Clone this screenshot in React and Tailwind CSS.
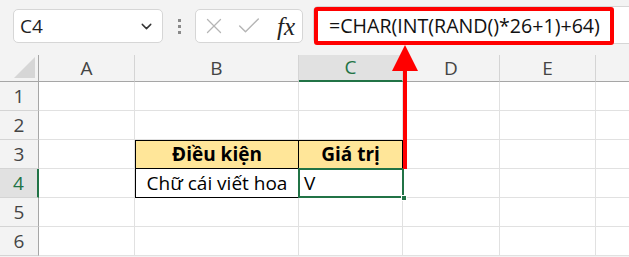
import { ChevronDown, X, Check } from "lucide-react";

const cols = ["A", "B", "C", "D", "E", "F"];
const rows = [1, 2, 3, 4, 5, 6];

function HeaderCell({ label }) {
    const selected = label === "C";
    return (
        <div
            className={
                selected
                    ? "h-[27px] flex items-center justify-center bg-[#e1e1e1] text-[#217346] border-r border-[#d4d4d4] border-b-2 border-b-[#217346]"
                    : "h-[27px] flex items-center justify-center text-[#444] border-r border-[#d4d4d4] border-b border-b-[#a6a6a6]"
            }
        >
            {label === "F" ? "" : label}
        </div>
    );
}

function Cell({ r, c }) {
    // bảng B3:C4
    if (r === 3 && c === "B")
        return <div className="h-[29px] bg-[#ffe699] border border-black flex items-center justify-center font-bold">Điều kiện</div>;
    if (r === 3 && c === "C")
        return <div className="h-[29px] bg-[#ffe699] border-y border-r border-black flex items-center justify-center font-bold">Giá trị</div>;
    if (r === 4 && c === "B")
        return <div className="h-[29px] bg-white border-x border-b border-black flex items-center justify-center">Chữ cái viết hoa</div>;
    if (r === 4 && c === "C")
        return (
            <div className="h-[29px] bg-white relative border-b border-black">
                <div className="absolute -left-[1px] -top-[1px] -right-[1px] -bottom-[1px] border-2 border-[#217346] flex items-center pl-[4px]">V</div>
                <div className="absolute -right-[4px] -bottom-[4px] w-[6px] h-[6px] bg-[#217346] border border-white" />
            </div>
        );
    return <div className="h-[29px] bg-white border-r border-b border-[#e1e1e1]" />;
}

export default function App() {
    return (
        <div className="w-[629px] h-[257px] bg-[#f3f3f3] overflow-hidden relative font-['Open_Sans',sans-serif]">
            {/* thanh công thức */}
            <div className="h-[55px] flex items-start pt-[9px] pl-[13px]">
                <div className="w-[150px] h-[34px] bg-white border border-[#d6d6d6] rounded-[5px] flex items-center justify-between pl-[6px] pr-[7px]">
                    <span className="text-[19px] text-[#222]">C4</span>
                    <ChevronDown className="w-[17px] h-[17px] text-[#333]" strokeWidth={2} />
                </div>
                <div className="w-[32px] h-[34px] flex flex-col items-center justify-center gap-[3px]">
                    <span className="w-[3px] h-[3px] bg-[#8a8a8a]" />
                    <span className="w-[3px] h-[3px] bg-[#8a8a8a]" />
                    <span className="w-[3px] h-[3px] bg-[#8a8a8a]" />
                </div>
                <div className="w-[108px] h-[34px] bg-white border border-[#d6d6d6] rounded-[5px] flex items-center pl-[5px] gap-[8px]">
                    <X className="w-[26px] h-[26px] text-[#b5b5b5]" strokeWidth={1.2} />
                    <Check className="w-[28px] h-[28px] text-[#b5b5b5]" strokeWidth={1.2} />
                    <span className="ml-[6px] text-[25px] leading-none italic text-[#222] font-['Liberation_Serif',serif]">fx</span>
                </div>
                <div className="ml-[10px] flex-1 h-[38px] -mt-[3px] bg-white border border-[#d6d6d6] rounded-l-[5px] -mr-[8px]">
                    <div className="w-[300px] h-[38px] border-[4px] border-[#ff0000] rounded-[3px] flex items-center pl-[11px] text-[19.6px] text-[#111]">
                        =CHAR(INT(RAND()*26+1)+64)
                    </div>
                </div>
            </div>

            {/* lưới */}
            <div className="grid grid-cols-[39px_96px_164px_104px_97px_96px_60px] text-[19px] text-black">
                <div className="h-[27px] border-r border-b border-[#a6a6a6] relative">
                    <svg className="absolute right-[3px] bottom-[3px]" width="21" height="21" viewBox="0 0 21 21">
                        <polygon points="21,0 21,21 0,21" fill="#d6d6d6" />
                    </svg>
                </div>
                {cols.map((c) => (
                    <HeaderCell key={c} label={c} />
                ))}
                {rows.map((r) => (
                    <div key={r} className="contents">
                        <div
                            className={
                                r === 4
                                    ? "h-[29px] flex items-center justify-center bg-[#e1e1e1] text-[#217346] border-b border-[#d4d4d4] border-r-2 border-r-[#217346]"
                                    : "h-[29px] flex items-center justify-center text-[#444] border-b border-[#d4d4d4] border-r border-r-[#a6a6a6]"
                            }
                        >
                            {r}
                        </div>
                        {cols.map((c) => (
                            <Cell key={c} r={r} c={c} />
                        ))}
                    </div>
                ))}
            </div>

            {/* mũi tên đỏ */}
            <svg className="absolute left-[390px] top-[44px]" width="30" height="126" viewBox="0 0 30 126">
                <polygon points="15,1 28,27 2,27" fill="#ff0000" />
                <rect x="13" y="26" width="4" height="99" fill="#ff0000" />
            </svg>
        </div>
    );
}
